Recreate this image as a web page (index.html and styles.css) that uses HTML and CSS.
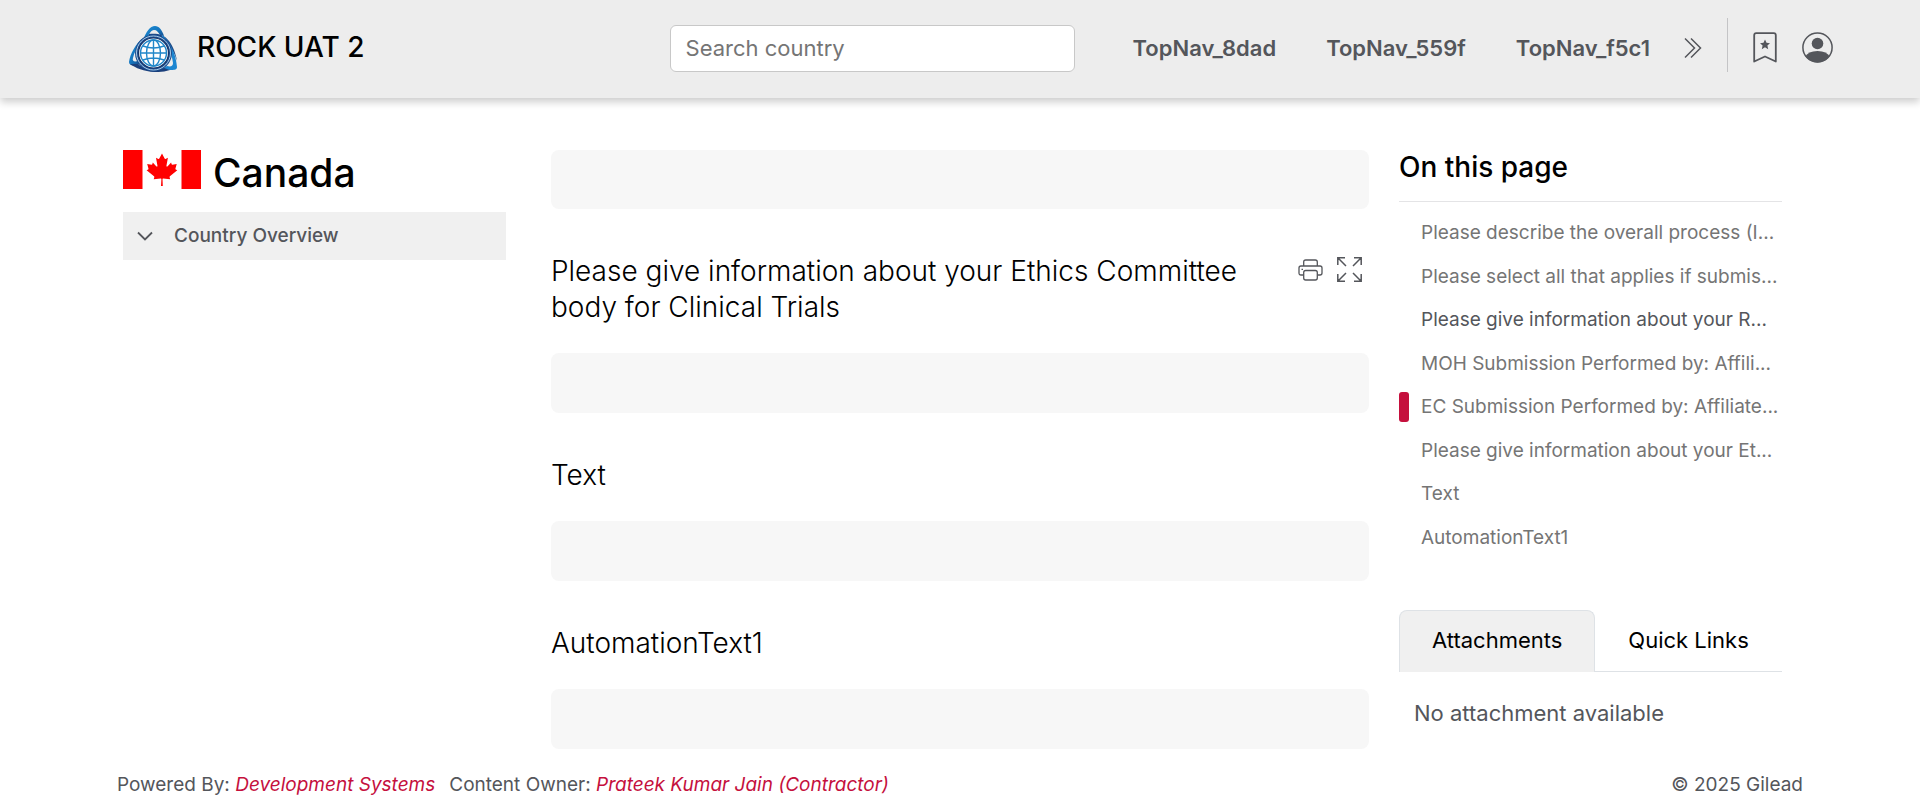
FILE: index.html
```html
<!DOCTYPE html>
<html lang="en">
<head>
<meta charset="utf-8">
<meta name="viewport" content="width=device-width, initial-scale=1">
<title>ROCK UAT 2 - Canada</title>
<link rel="stylesheet" href="styles.css">
</head>
<body>
<header class="topbar">
  <a class="brand" href="#">
    <svg class="brand-logo" viewBox="0 0 48 46" aria-hidden="true">
      <defs>
        <linearGradient id="ribbon" x1="0" y1="0" x2="1" y2="1">
          <stop offset="0" stop-color="#1d8fd6"/>
          <stop offset="0.5" stop-color="#1577c0"/>
          <stop offset="1" stop-color="#16407e"/>
        </linearGradient>
      </defs>
      <path fill="url(#ribbon)" d="M14 14C17 6 21 0 26 0c4 0 7 4 9 10l-4-1c-2-3-3-5-6-5-3 0-5 4-7 9z"/>
      <path fill="#1f4a86" d="M20 8c7-1 15 0 20 7 4 5 7 13 8 20-2-7-6-14-10-18-5-5-11-7-18-7z"/>
      <path fill="#1c86d1" d="M33 9c8 6 14 19 15 32 0 3-3 3-7 3l-8-1 5-3c4 1 6 0 6-3-1-9-5-18-11-24z"/>
      <path fill="url(#ribbon)" d="M14 12C7 17 1 28 0 36c0 3 3 4 8 3l4-1-3-3c-4 1-6 0-5-3 1-5 4-11 8-15z"/>
      <path fill="#1b3f7b" d="M1 38c8 6 24 11 40 6l-6-2c-9 3-20 1-26-4z"/>
      <circle cx="24.500" cy="27" r="18.500" fill="#1b4c8d"/>
      <circle cx="24.500" cy="27" r="17" fill="none" stroke="#a9cbe8" stroke-width="1"/>
      <circle cx="24.500" cy="27" r="15" fill="#fff" stroke="#173366" stroke-width="1.200"/>
      <g fill="none" stroke="#2187c9" stroke-width="1.400">
        <circle cx="24.500" cy="27" r="13"/>
        <ellipse cx="24.500" cy="27" rx="7" ry="13"/>
        <path d="M24.500 14v26M11.500 27h26M14 20q10.500 4 21 0M14 34q10.500-4 21 0"/>
      </g>
    </svg>
    <span class="brand-name">ROCK UAT 2</span>
  </a>
  <input class="search" type="search" placeholder="Search country" aria-label="Search country">
  <nav class="topnav" aria-label="Main">
    <a href="#">TopNav_8dad</a>
    <a href="#">TopNav_559f</a>
    <a href="#">TopNav_f5c1</a>
  </nav>
  <button class="icon-button more" type="button" aria-label="More">
    <svg width="18" height="22" viewBox="0 0 18 22"><path d="M1 1.500 10.500 11 1 20.500M7 1.500l9.500 9.500L7 20.500" fill="none" stroke="currentColor" stroke-width="1.500"/></svg>
  </button>
  <div class="actions">
    <button class="icon-button" type="button" aria-label="Bookmarks">
      <svg width="24" height="31" viewBox="0 0 24 31"><path d="M1.200 29.500V3.200q0-2 2-2h17.600q2 0 2 2v26.300L12 24.500z" fill="none" stroke="currentColor" stroke-width="1.800" stroke-linejoin="round"/><path d="m12 7.500 1.500 3.300 3.500.4-2.600 2.400.8 3.600-3.200-1.900-3.200 1.900.8-3.600L7 11.200l3.500-.4z" fill="currentColor"/></svg>
    </button>
    <button class="icon-button" type="button" aria-label="Account">
      <svg width="31" height="31" viewBox="0 0 31 31"><defs><clipPath id="face"><circle cx="15.500" cy="15.500" r="15"/></clipPath></defs><circle cx="15.500" cy="15.500" r="14.600" fill="none" stroke="currentColor" stroke-width="1.500"/><circle cx="15.500" cy="11.500" r="5.800" fill="currentColor"/><path clip-path="url(#face)" d="M3 25q3-6 12.500-6T28 25v6H3z" fill="currentColor"/></svg>
    </button>
  </div>
</header>

<main class="layout">
  <aside class="sidebar">
    <h1 class="country">
      <svg class="flag" viewBox="0 0 78 39" role="img" aria-label="Flag of Canada">
        <path fill="#fff" d="M0 0h78v39H0z"/>
        <path fill="red" d="M0 0h19.500v39H0zM58.500 0H78v39H58.500z"/>
        <path fill="red" d="m39 3.500-2.700 5c-.3.500-.8.500-1.400.2l-1.900-1 1.400 7.700c.3 1.400-.7 1.400-1.200.8l-3.400-3.800-.5 1.900c-.1.300-.4.500-.8.500l-4.300-.9 1.100 4.100c.2.900.4 1.300-.2 1.500l-1.500.7 7.400 6c.3.200.4.600.3 1l-.6 2.100 7.100-.8c.4 0 .6.200.6.600L38 36h1.800l-.3-6.900c0-.4.200-.6.600-.6l7.100.8-.6-2.100c-.1-.4 0-.8.300-1l7.400-6-1.500-.7c-.6-.2-.4-.6-.2-1.500l1.100-4.100-4.300.9c-.4 0-.7-.2-.8-.5l-.5-1.900-3.400 3.800c-.5.600-1.500.6-1.200-.8l1.400-7.700-1.900 1c-.6.300-1.100.3-1.400-.2z"/>
      </svg>
      Canada
    </h1>
    <button class="section-toggle" type="button" aria-expanded="false">
      <svg width="16" height="10" viewBox="0 0 16 10" aria-hidden="true"><path d="m1 1.500 7 7 7-7" fill="none" stroke="currentColor" stroke-width="1.800"/></svg>
      Country Overview
    </button>
  </aside>

  <div class="content">
    <div class="answer"></div>
    <section class="question">
      <div class="question-head">
        <h2>Please give information about your Ethics Committee body for Clinical Trials</h2>
        <div class="tools">
          <button class="icon-button" type="button" aria-label="Print">
            <svg width="25" height="22" viewBox="0 0 25 22" fill="none" stroke="currentColor" stroke-width="1.300"><path d="M5.700 7V3q0-2 2-2h9.600q2 0 2 2v4M5.700 16H3q-2 0-2-2V9q0-2 2-2h19q2 0 2 2v5q0 2-2 2h-2.700"/><rect x="5.700" y="11.500" width="13.600" height="9.500" rx="2"/><path d="M3.500 10.300H5"/></svg>
          </button>
          <button class="icon-button" type="button" aria-label="Expand">
            <svg width="25" height="25" viewBox="0 0 25 25" fill="none" stroke="currentColor" stroke-width="1.500"><path d="M.8 8V.8H8M.8.800 9 9M17 .8h7.200V8M24.200.8 16 9M.8 17v7.200H8M.8 24.200 9 16M24.200 17v7.200H17M24.200 24.200 16 16"/></svg>
          </button>
        </div>
      </div>
      <div class="answer"></div>
    </section>
    <section class="question">
      <div class="question-head"><h2>Text</h2></div>
      <div class="answer"></div>
    </section>
    <section class="question">
      <div class="question-head"><h2>AutomationText1</h2></div>
      <div class="answer"></div>
    </section>
  </div>

  <aside class="rail">
    <h2 class="rail-title">On this page</h2>
    <ul class="toc">
      <li><a href="#">Please describe the overall process (I...</a></li>
      <li><a href="#">Please select all that applies if submis...</a></li>
      <li><a class="visited" href="#">Please give information about your R...</a></li>
      <li><a href="#">MOH Submission Performed by: Affili...</a></li>
      <li class="current"><a href="#">EC Submission Performed by: Affiliate...</a></li>
      <li><a href="#">Please give information about your Et...</a></li>
      <li><a href="#">Text</a></li>
      <li><a href="#">AutomationText1</a></li>
    </ul>
    <div class="tabs" role="tablist">
      <button class="tab selected" type="button" role="tab" aria-selected="true">Attachments</button>
      <button class="tab" type="button" role="tab" aria-selected="false">Quick Links</button>
    </div>
    <p class="tab-panel">No attachment available</p>
  </aside>
</main>

<footer class="footer">
  <p>Powered By: <a href="#">Development Systems</a></p>
  <p>Content Owner: <a href="#">Prateek Kumar Jain (Contractor)</a></p>
  <p class="copyright">© 2025 Gilead</p>
</footer>
</body>
</html>
```
FILE: styles.css
```css
* {
  box-sizing: border-box;
}

body {
  margin: 0;
  background: #fff;
  color: #54565b;
  font-family: Inter, "Liberation Sans", sans-serif;
  font-size: 19px;
  line-height: 30px;
}

h1, h2, p, ul {
  margin: 0;
  padding: 0;
}

a {
  color: inherit;
  text-decoration: none;
}

button {
  border: 0;
  background: none;
  color: inherit;
  font: inherit;
  cursor: pointer;
}

svg {
  display: block;
}

/* Top bar */
.topbar {
  display: flex;
  align-items: center;
  padding: 0 87px 4px 129px;
  min-height: 98px;
  background: #ededed;
  box-shadow: 0 4px 8px rgba(0, 0, 0, 0.2);
}

.brand {
  display: flex;
  flex: 1;
  align-items: center;
  gap: 20px;
}

.brand-logo {
  width: 48px;
  height: 46px;
  margin-top: 4px;
}

.brand-name {
  color: #000;
  font-size: 28px;
  font-weight: 500;
  white-space: nowrap;
}

.search {
  width: 405px;
  height: 47px;
  margin: 2px 58px 0 24px;
  padding: 0 15px;
  border: 1px solid #c8c8c8;
  border-radius: 6px;
  background: #fff;
  font: inherit;
  font-size: 22px;
}

.search::placeholder {
  color: #757575;
}

.topnav {
  display: flex;
  gap: 50px;
  padding-top: 2px;
  font-size: 22px;
  font-weight: 600;
}

.icon-button {
  padding: 0;
}

.more {
  margin: 2px 25px 0 34px;
}

.actions {
  display: flex;
  align-items: center;
  gap: 25px;
  height: 54px;
  margin-top: -4px;
  padding-left: 25px;
  border-left: 1px solid #c4c4c6;
}

.actions .icon-button {
  padding-top: 4px;
}

/* Three-column page */
.layout {
  display: grid;
  grid-template-columns: minmax(0, 383fr) minmax(0, 833fr) minmax(0, 383fr);
  gap: 30px;
  padding: 52px 138px 0 123px;
}

.country {
  display: flex;
  gap: 12px;
  color: #000;
  font-size: 39px;
  font-weight: 500;
  line-height: 46px;
}

.flag {
  width: 78px;
  height: 39px;
}

.section-toggle {
  display: flex;
  align-items: center;
  gap: 21px;
  width: 100%;
  height: 48px;
  margin-top: 16px;
  padding: 0 14px;
  background: #f0f0f0;
  font-weight: 500;
}

.content {
  padding-left: 15px;
}

.answer {
  min-height: 59px;
  border-radius: 8px;
  background: #f7f7f7;
}

.question .answer {
  min-height: 60px;
}

.question-head {
  display: flex;
  justify-content: space-between;
  align-items: flex-start;
  gap: 20px;
  padding: 44px 7px 28px 0;
}

.question-head h2 {
  color: #000;
  font-size: 28px;
  font-weight: 300;
  line-height: 36px;
}

.tools {
  display: flex;
  align-items: center;
  gap: 14px;
  padding-top: 4px;
}

/* Right rail */
.rail-title {
  padding-bottom: 17px;
  border-bottom: 1px solid #e4e4e6;
  color: #000;
  font-size: 28px;
  font-weight: 500;
  line-height: 34px;
}

.toc {
  display: flex;
  flex-direction: column;
  justify-content: space-between;
  min-height: 335px;
  margin-top: 16px;
  color: #757575;
  list-style: none;
}

.toc li {
  position: relative;
  padding-left: 22px;
}

.toc a {
  display: block;
}

.toc .visited {
  color: #54565b;
}

.toc .current::before {
  position: absolute;
  top: 0;
  left: 0;
  width: 10px;
  height: 30px;
  border-radius: 3px;
  background: #c5103d;
  content: "";
}

.tabs {
  display: flex;
  margin-top: 57px;
  border-bottom: 1px solid #dee2e6;
}

.tab {
  height: 61px;
  padding: 0 32px 2px;
  border: 1px solid transparent;
  border-bottom: 0;
  color: #000;
  font-size: 22px;
  white-space: nowrap;
}

.tab.selected {
  height: 62px;
  margin-bottom: -1px;
  padding-bottom: 3px;
  border-color: #dee2e6;
  border-radius: 8px 8px 0 0;
  background: #f0f0f0;
}

.tab-panel {
  padding: 26px 15px 0;
  font-size: 22px;
}

/* Footer */
.footer {
  display: flex;
  gap: 14px;
  padding: 21px 117px 12px;
}

.footer a {
  color: #c5103d;
  font-style: italic;
}

.copyright {
  margin-left: auto;
}
```
